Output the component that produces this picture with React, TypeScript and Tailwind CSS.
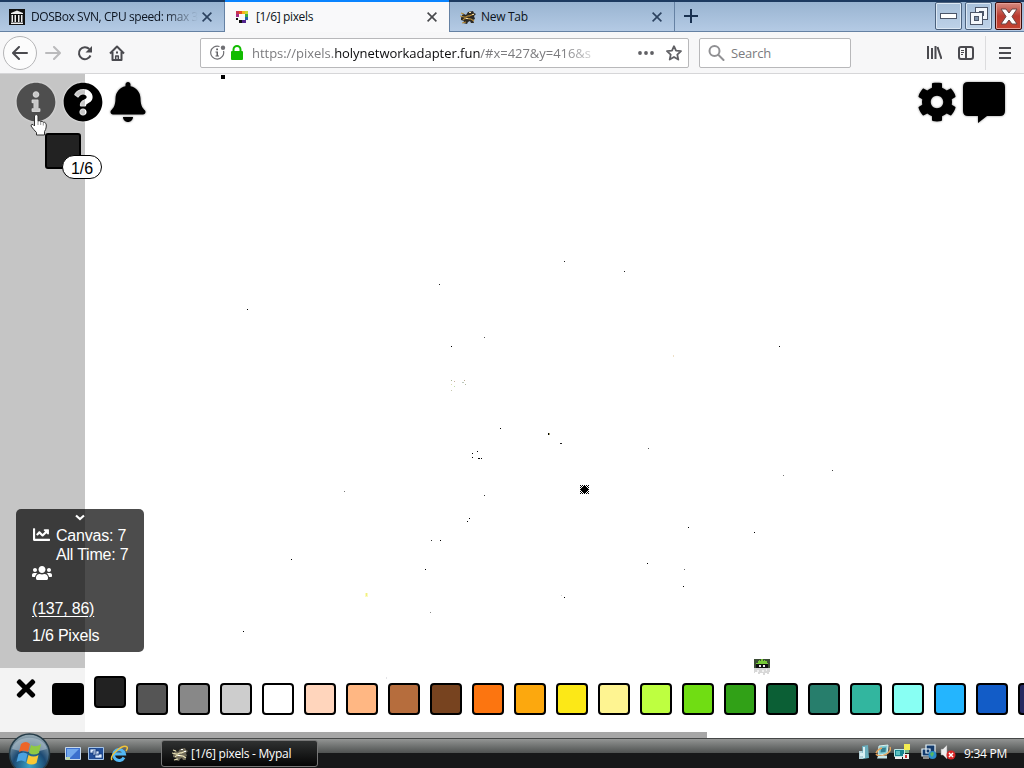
import type { ReactNode } from "react";
import { FaBell, FaChartLine, FaChevronDown, FaCog, FaInfoCircle, FaQuestionCircle, FaTimes, FaUsers } from "react-icons/fa";

const palette = [
  "#000000", "#222222", "#555555", "#888888", "#cdcdcd", "#ffffff", "#ffd5bc", "#ffb783",
  "#b66d3d", "#77431f", "#fc7510", "#fca80e", "#fce817", "#fef491", "#beff40", "#70dd13",
  "#31a117", "#0b5f35", "#277e6c", "#32b69f", "#88fff3", "#24b5fe", "#125cc7", "#262960",
];
const selectedColor = "#222222";

// [x, y, width, height, color] on the board
const pixels: [number, number, number, number, string][] = [
  [221, 75, 4, 4, "#000"], [247, 309, 1, 1, "#000"], [439, 284, 1, 1, "#222"], [564, 261, 1, 1, "#222"],
  [624, 271, 1, 1, "#222"], [484, 337, 1, 1, "#555"], [451, 346, 1, 1, "#000"], [779, 346, 1, 1, "#000"],
  [673, 355, 1, 2, "#eee0c8"], [451, 380, 1, 1, "#a9b595"], [454, 381, 1, 1, "#c8b0a0"], [454, 386, 1, 1, "#bda"],
  [451, 384, 1, 1, "#dcdcb0"], [451, 390, 1, 1, "#c8c8b0"], [462, 382, 2, 1, "#bcc8bc"], [464, 380, 1, 1, "#b9a890"],
  [465, 384, 1, 1, "#b0b8a0"], [500, 428, 1, 1, "#000"], [548, 433, 1, 2, "#000"], [549, 433, 1, 2, "#aaa370"],
  [560, 443, 2, 1, "#222"], [648, 448, 1, 1, "#555"], [472, 453, 1, 1, "#000"], [477, 451, 1, 1, "#000"],
  [472, 457, 1, 1, "#000"], [478, 458, 2, 1, "#000"], [481, 458, 1, 1, "#000"], [832, 470, 1, 1, "#444"],
  [783, 475, 1, 1, "#777"], [344, 491, 1, 1, "#777"], [484, 495, 1, 1, "#333"], [469, 518, 1, 1, "#000"],
  [467, 521, 1, 1, "#000"], [688, 527, 1, 1, "#000"], [754, 532, 1, 1, "#000"], [431, 540, 1, 1, "#333"],
  [440, 540, 1, 1, "#000"], [291, 559, 1, 1, "#000"], [647, 563, 1, 1, "#000"], [425, 569, 1, 1, "#000"],
  [684, 569, 1, 1, "#666"], [683, 586, 1, 1, "#000"], [365, 593, 3, 4, "#fbfac0"], [366, 593, 1, 3, "#f0ef80"],
  [564, 597, 1, 1, "#000"], [561, 595, 1, 1, "#ccc"], [430, 612, 1, 1, "#888"], [243, 631, 1, 1, "#000"],
  [386, 677, 1, 2, "#778"],
];

const burst = Array.from({ length: 81 }, (_, i) => ({ x: i % 9, y: Math.floor(i / 9) })).filter(
  ({ x, y }) => Math.abs(x - 4) + Math.abs(y - 4) <= 3 || (x + y) % 2 === 0,
);

function Board() {
  return (
    <svg className="absolute inset-0" width="1024" height="664" viewBox="0 74 1024 664" shapeRendering="crispEdges">
      <rect x="0" y="74" width="85" height="664" fill="#c5c5c5" />
      {pixels.map(([x, y, w, h, color]) => (
        <rect key={`${x}-${y}`} x={x} y={y} width={w} height={h} fill={color} />
      ))}
      {burst.map(({ x, y }) => (
        <rect key={`${x}-${y}`} x={580 + x} y={485 + y} width="1" height="1" fill="#000" />
      ))}
      <g transform="translate(754 659)">
        <path fill="#3c4d35" d="M0 0h16v9H0z" />
        <path fill="#75c936" d="M2 5h12V4h-1V2h-2V1h-1v1H9V0H7v2H6V1H5v1H4v2H2z" />
        <path fill="#111" d="M2 5h12v4H2z" />
        <path fill="#eee" d="M5 6h2v2H5zM9 6h2v2H9z" />
        <path fill="#3a3a3a" d="M0 9h16v4h-1v2h-2v-1h-2v2H9v-2H6v1H4v-2H1v1H0z" />
        <path fill="#bbb" d="M3 11h2v2H3zM8 11h2v2H8zM12 10h1v2h-1z" />
      </g>
    </svg>
  );
}

function TempleIcon() {
  return (
    <svg width="16" height="16" viewBox="0 0 16 16">
      <path fill="#111" d="M0 0h16v16H0z" />
      <path fill="#eee" d="M8 1.500 14 4v1H2V4zM2.500 6h1.500v7H2.500zM5.500 6H7v7H5.500zM9 6h1.500v7H9zM12 6h1.500v7H12zM2 13.500h12V15H2z" />
    </svg>
  );
}

function PixelsIcon() {
  return (
    <svg width="12" height="12" viewBox="0 0 12 12" shapeRendering="crispEdges">
      <path fill="#c93550" d="M0 0h3v3H0z" />
      <path fill="#e8501e" d="M3 0h3v3H3z" />
      <path fill="#f4b51c" d="M6 0h3v3H6z" />
      <path fill="#c8dc2b" d="M9 0h3v3H9z" />
      <path fill="#a32a84" d="M0 3h3v3H0z" />
      <path fill="#3aaa4a" d="M9 3h3v3H9z" />
      <path fill="#111" d="M0 7h2v2H0zM3 9h3v3H3z" />
      <path fill="#2560aa" d="M9 6h3v3H9z" />
      <path fill="#52248f" d="M6 9h4v3H6z" />
    </svg>
  );
}

function MypalIcon({ light = false }: { light?: boolean }) {
  const dark = light ? "#6f6a58" : "#2c2924";
  return (
    <svg width="16" height="16" viewBox="0 0 16 16">
      <path fill={dark} d="M1 9c1-2 1-4 3-4l2 1 2-3 5-1 1 2 2 1-2 2 1 3-2 1 1 3h-3l-1-2-2 1-1 2-4-1 1-2-3-1z" />
      <path fill="none" stroke={light ? "#ede5b8" : "#b98d3a"} strokeWidth="1.200" d="M0 7l4 1c3 1 3-2 5-1l5-2M3 11c2-3 5-1 8-1l3 2M2 14l4-1M1 4l3 1" />
      <path fill={light ? "#fff" : "#f0d9a0"} d="M9 3h2v1H9zM12 5h2v1h-2zM6 9h2v1H6z" />
    </svg>
  );
}

function TabClose({ dark = false }: { dark?: boolean }) {
  return (
    <svg className="shrink-0" width="10" height="10" viewBox="0 0 10 10" fill="none" stroke={dark ? "#48494c" : "#2c4260"} strokeWidth="1.600">
      <path d="m.6.6 8.800 8.800M9.400.6.600 9.400" />
    </svg>
  );
}

function TitleBar() {
  return (
    <div className="flex h-8 shrink-0 border-t-2 border-[#1d3a60] bg-linear-to-b from-[#99b4d1] to-[#b5cbe5] text-[12px] text-[#0c1420]">
      <div className="flex w-[225px] items-center border-r border-b border-[#6581a3] pr-[12px] pl-[9px]">
        <TempleIcon />
        <span className="ml-[6px] mask-r-from-80% whitespace-nowrap tracking-[-0.42px]">DOSBox SVN, CPU speed: max 3</span>
        <span className="ml-auto"><TabClose /></span>
      </div>
      <div className="-mt-[2px] flex w-[224px] items-center border-t-2 border-[#0a84ff] bg-[#f9f9fa] pr-[12px] pl-[11px]">
        <PixelsIcon />
        <span className="ml-[8px] tracking-[-0.35px]">[1/6] pixels</span>
        <span className="ml-auto"><TabClose dark /></span>
      </div>
      <div className="flex w-[226px] items-center border-r border-b border-l border-[#6581a3] pr-[12px] pl-[10px]">
        <MypalIcon />
        <span className="ml-[5px] tracking-[-0.3px]">New Tab</span>
        <span className="ml-auto"><TabClose /></span>
      </div>
      <div className="flex flex-1 border-b border-[#6581a3] pr-[2px] pl-[9px]">
        <svg className="mt-[7px]" width="14" height="14" viewBox="0 0 14 14" stroke="#1a3150" strokeWidth="2"><path d="M7 0v14M0 7h14" /></svg>
        <div className="ml-auto flex gap-[3px]">
          <div className="flex h-[28px] w-[27px] items-center justify-center rounded-[2px] border border-[#4b617d] bg-linear-to-b from-[#a8c0da] to-[#bed2e8] shadow-[inset_0_0_0_1px_#dce8f4]">
            <div className="h-[6px] w-[17px] border border-[#4b5568] bg-white" />
          </div>
          <div className="flex h-[28px] w-[27px] items-center justify-center rounded-[2px] border border-[#4b617d] bg-linear-to-b from-[#a8c0da] to-[#bed2e8] shadow-[inset_0_0_0_1px_#dce8f4]">
            <svg width="20" height="20" viewBox="0 0 20 20" fill="none">
              <path stroke="#4b5568" strokeWidth="5" d="M8.500 3.500h8v8h-8z" />
              <path stroke="#f4f8fc" strokeWidth="3" d="M8.500 3.500h8v8h-8z" />
              <path fill="#7f93ab" stroke="#4b5568" strokeWidth="5" d="M3.500 8.500h8v8h-8z" />
              <path stroke="#f4f8fc" strokeWidth="3" d="M3.500 8.500h8v8h-8z" />
            </svg>
          </div>
          <div className="flex h-[28px] w-[27px] items-center justify-center rounded-[2px] border border-[#3a0c0c] bg-linear-to-b from-[#d68a80] via-[#b93a30] via-50% to-[#c44331] shadow-[inset_0_0_0_1px_#e6a097]">
            <svg width="18" height="17" viewBox="0 0 18 17">
              <path fill="#fff" stroke="#684545" d="M1 1h5l3 4 3-4h5l-5 7.500 5 7.500h-5l-3-4-3 4H1l5-7.500z" />
            </svg>
          </div>
        </div>
      </div>
    </div>
  );
}

function Toolbar() {
  return (
    <div className="flex h-[42px] shrink-0 items-center border-b border-[#d6d6d8] bg-[#f7f7f8] text-[13px] text-[#4a4a4f]">
      <div className="ml-[3px] flex size-[34px] items-center justify-center rounded-full border border-[#b5b5b7] bg-[#fcfcfc]">
        <svg width="16" height="14" viewBox="0 0 16 14" fill="none" stroke="#4a4a4f" strokeWidth="2" strokeLinecap="round" strokeLinejoin="round"><path d="M15 7H1.500M7 1 1 7l6 6" /></svg>
      </div>
      <svg className="ml-[8px]" width="16" height="14" viewBox="0 0 16 14" fill="none" stroke="#bababc" strokeWidth="2" strokeLinecap="round" strokeLinejoin="round"><path d="M1 7h13.500M9 1l6 6-6 6" /></svg>
      <svg className="ml-[16px]" width="16" height="16" viewBox="0 0 16 16" fill="none" stroke="#4a4a4f" strokeWidth="2"><path d="M13.500 10.500A6 6 0 1 1 12.300 4" /><path fill="#4a4a4f" stroke="none" d="M15 1v6.500H8.500z" /></svg>
      <svg className="ml-[16px]" width="16" height="16" viewBox="0 0 16 16" fill="none" stroke="#4a4a4f" strokeWidth="2" strokeLinejoin="round"><path d="M1 8.500 8 1.500l7 7M3.500 7v8h9V7" /><path strokeWidth="1.500" d="M6.700 15v-4h2.600v4" /><path fill="#4a4a4f" stroke="none" d="M7 6.500h2v2H7z" /></svg>
      <div className="ml-[75px] flex h-[30px] w-[489px] items-center rounded-[2px] border border-[#b8b8ba] bg-white pl-[9px]">
        <svg width="16" height="16" viewBox="0 0 16 16">
          <path fill="none" stroke="#707074" strokeWidth="1.200" d="M9.500 1.500A6.500 6.500 0 1 0 13.500 6" />
          <circle cx="13" cy="2.700" r="2.200" fill="#707074" />
          <path fill="#606064" d="M6.200 3.500h1.800v1.800H6.200zM5.500 6.500H8v4h1v1H5.500v-1h1v-3h-1z" />
        </svg>
        <svg className="ml-[5px]" width="12" height="15" viewBox="0 0 12 15"><rect y="6" width="12" height="9" rx="1" fill="#12bc00" /><path d="M2.500 7V4.500a3.500 3.500 0 0 1 7 0V7" fill="none" stroke="#12bc00" strokeWidth="2" /></svg>
        <div className="mt-[2px] ml-[9px] w-[353px] mask-r-from-88% whitespace-nowrap tracking-[-0.03px] text-[#7b7b7e]">
          https://pixels.<span className="text-[#0c0c0d]">holynetworkadapter.fun</span>/#x=427&y=416&s
        </div>
        <svg className="ml-[33px]" width="16" height="4" viewBox="0 0 16 4" fill="#606064"><circle cx="2" cy="2" r="1.900" /><circle cx="8" cy="2" r="1.900" /><circle cx="14" cy="2" r="1.900" /></svg>
        <svg className="ml-[12px]" width="16" height="16" viewBox="0 0 16 16" fill="none" stroke="#606064" strokeWidth="1.800" strokeLinejoin="round"><path d="m8 1.200 2 4.500 5 .5-3.700 3.400 1 5L8 12l-4.300 2.600 1-5L1 6.200l5-.5z" /></svg>
      </div>
      <div className="ml-[10px] flex h-[30px] w-[152px] items-center rounded-[2px] border border-[#b8b8ba] bg-white pl-[8px] text-[#7b7b7e]">
        <svg width="17" height="16" viewBox="0 0 17 16" fill="none" stroke="#909093" strokeWidth="2" strokeLinecap="round"><circle cx="6.500" cy="6" r="5" /><path d="m10.500 10 5 5" /></svg>
        <span className="mt-[2px] ml-[6px] tracking-[-0.2px]">Search</span>
      </div>
      <svg className="ml-[75px]" width="16" height="15" viewBox="0 0 16 15" fill="none" stroke="#4a4a4f" strokeWidth="2"><path d="M2 1v13M6 3v11M9.500 1v13" /><path d="m11.500 2 4 12" /></svg>
      <svg className="ml-[16px]" width="16" height="14" viewBox="0 0 16 14" fill="none" stroke="#4a4a4f" strokeWidth="2"><rect x="1" y="1" width="14" height="12" rx="2" /><path d="M8 1v12" /><path strokeWidth="1" d="M3 4.500h3M3 6.500h3M3 8.500h2" /></svg>
      <div className="ml-[11px] h-[34px] w-px bg-[#dcdcde]" />
      <svg className="ml-[13px]" width="12" height="12" viewBox="0 0 12 12" stroke="#4a4a4f" strokeWidth="2"><path d="M0 1h12M0 6h12M0 11h12" /></svg>
    </div>
  );
}

function HandCursor() {
  return (
    <svg className="absolute top-[39px] left-[30px]" width="18" height="24" viewBox="0 0 18 24">
      <path
        fill="#fff"
        stroke="#333"
        d="M4.500 2.500q1.800-2 3.500 0V8q1.500-.8 2.700.5 1.500-.7 2.600.8 1.500-.5 2.600 1.200.6 1 .3 3.500-.2 2.500-1.700 4.500V22H6.500v-2.500Q3.500 16.500 1 13q0-2 2-1.500L4.500 13z"
      />
      <path fill="none" stroke="#777" strokeWidth=".8" d="M8 8v4M10.700 9v3M13.300 10v2.500" />
    </svg>
  );
}

function InfoPanel() {
  return (
    <div className="mt-[330px] ml-4 h-[143px] w-32 rounded-[5px] bg-black/70 pl-4 font-['Liberation_Sans',sans-serif] text-base tracking-[-0.2px] text-white">
      <svg className="pt-[5px] ml-[43px]" width="10" height="12" viewBox="0 0 10 7" fill="none" stroke="#fff" strokeWidth="2.200"><path d="m1 1.500 4 3.500 4-3.500" /></svg>
      <div className="mt-[5px] flex h-[38px]">
        <FaChartLine className="ml-[1px]" size={17} />
        <div className="ml-[6px] leading-[19px] whitespace-nowrap">
          <div>Canvas: 7</div>
          <div>All Time: 7</div>
        </div>
      </div>
      <FaUsers className="-mt-[1px]" size={20} />
      <div className="mt-[16px] leading-[20px] underline underline-offset-2">(137, 86)</div>
      <div className="mt-[7px] leading-[20px]">1/6 Pixels</div>
    </div>
  );
}

function Game() {
  return (
    <div className="relative h-[664px] shrink-0 overflow-hidden bg-white">
      <Board />
      <div className="relative flex h-full flex-col">
        <div className="flex h-[56px] items-start pt-[8px] pr-[19px] pl-4">
          <FaInfoCircle className="opacity-60 drop-shadow-[0_0_1px_#fff]" size={40} />
          <FaQuestionCircle className="ml-[7px] drop-shadow-[0_0_1px_#fff]" size={40} />
          <FaBell className="ml-[5px] drop-shadow-[0_0_1px_#888]" size={40} />
          <FaCog className="ml-auto drop-shadow-[0_0_1px_#888]" size={40} />
          <svg className="ml-[6px] drop-shadow-[0_0_1px_#888]" width="42" height="41" viewBox="0 0 42 41"><path d="M5 0h32q5 0 5 5v24q0 5-5 5H24l-9 7v-7H5q-5 0-5-5V5q0-5 5-5z" /></svg>
        </div>
        <div className="ml-[45px] flex h-[49px] pt-[3px]">
          <div className="size-9 rounded-[3px] border-2 border-black bg-[#222]" />
          <div className="mt-[22px] -ml-[19px] h-6 w-10 rounded-full border border-black bg-white text-center font-['Liberation_Sans',sans-serif] text-base leading-[25px]">1/6</div>
        </div>
        <InfoPanel />
        <div className="mt-auto flex h-[64px] shrink-0 bg-white/80">
          <FaTimes className="mt-[7px] ml-[12px] w-[28px] shrink-0" size={27} />
          <div className="ml-[12px] flex gap-[10px] pt-[15px]">
            {palette.map((color) => (
              <div
                key={color}
                className={`size-8 shrink-0 rounded-[4px] border-2 border-black ${color === selectedColor ? "-mt-[7px]" : ""}`}
                style={{ backgroundColor: color }}
              />
            ))}
          </div>
        </div>
        <div className="h-[6px] shrink-0 bg-white">
          <div className="h-full w-[707px] bg-[#a6a6a6]" />
        </div>
      </div>
      <HandCursor />
    </div>
  );
}

function TrayIcon({ children }: { children: ReactNode }) {
  return <svg width="16" height="16" viewBox="0 0 16 16">{children}</svg>;
}

function Taskbar() {
  return (
    <div className="relative flex h-[30px] items-center border-t border-[#454747] bg-linear-to-b from-[#939594] via-[#505352] via-48% to-[#171819] to-50% text-[12px] text-white">
      <svg className="absolute -top-[6px] left-[8px]" width="43" height="36" viewBox="0 0 43 36">
        <defs>
          <radialGradient id="orb" cx="50%" cy="80%" r="75%">
            <stop offset="0" stopColor="#3aa3c8" />
            <stop offset=".55" stopColor="#1c4a73" />
            <stop offset="1" stopColor="#8da2ad" />
          </radialGradient>
        </defs>
        <circle cx="21.500" cy="21" r="20" fill="url(#orb)" stroke="#263d49" strokeWidth="1.500" />
        <path fill="#b8c7cf" opacity=".55" d="M4 16C8 1 35 1 39 16q-17 6-35 0z" />
        <path fill="#ed6528" d="M13 11q5-4 9 0l-2 8q-4-3-9 0z" />
        <path fill="#8fc945" d="M23 12q5 3 10-1l-2 9q-5 3-10 0z" />
        <path fill="#4ba2e0" d="M10.500 21q5-3 9 0l-2 8q-4-3-9 0z" />
        <path fill="#fbc834" d="M20.500 22q5 3 10 0l-2 8q-5 3-10 0z" />
      </svg>
      <div className="ml-[65px] flex items-center gap-[7px]">
        <svg width="16" height="14" viewBox="0 0 16 14"><path fill="#3b6fcd" stroke="#c7d9ec" d="M.5.500h15v12H.5z" /><path fill="#72a7ec" d="M2 2h12L5 11H2z" /><path fill="#bcd7ad" d="M1 10h4v3H1z" /></svg>
        <svg width="16" height="14" viewBox="0 0 16 14"><path fill="#234f99" stroke="#a5c3e6" d="M.5.500h15v12H.5z" /><path fill="#dcecff" stroke="#123876" strokeWidth=".7" d="M2 2h6v4H2zM5 4h6v4H5zM7 7h7v4H7z" /></svg>
        <svg className="-ml-px" width="18" height="18" viewBox="0 0 18 18">
          <path fill="none" stroke="#53b8f4" strokeWidth="3" d="M14 12.500A5.500 5.500 0 1 1 14.500 9H5" />
          <path fill="none" stroke="#f2c437" strokeWidth="1.500" d="M2 15C-1 10 13-1 17 2q1 1-1 4" />
        </svg>
      </div>
      <div className="ml-[33px] flex h-[27px] w-[157px] items-center rounded-[3px] border border-[#777] bg-linear-to-b from-[#303232] to-[#060606] pl-[10px]">
        <MypalIcon light />
        <span className="ml-[3px] tracking-[-0.25px]">[1/6] pixels - Mypal</span>
      </div>
      <div className="mr-[16px] ml-auto flex items-center">
        <div className="-mt-[4px] flex items-center gap-[3px]">
          <TrayIcon><path fill="#b6d3da" d="M3 7h5v8H3z" /><path fill="#6aaebd" d="M6 2l6-1 1 13-6 1z" /><path fill="#d7eff3" d="M7 3h2v11H7zM4 9h3v3H4z" /></TrayIcon>
          <TrayIcon><path fill="#83cdd4" stroke="#d9f0ee" d="M4 2l9-1-1 9-9 1z" /><path fill="#347f90" d="M6 4l5-.500L10.500 8l-5 .500z" /><path fill="none" stroke="#e5a55c" strokeWidth="1.500" d="M1 10c3 5 17-1 14-7M1 9q2-4 6-5" /><path fill="#c8e6e8" d="M3 12l9-.500v3H2z" /></TrayIcon>
          <TrayIcon><path fill="#17838f" stroke="#bde7e5" d="M.5 5.500h10v7H.5z" /><path fill="#5cc0c0" d="M2 7h4v4H2z" /><path fill="#f4ed52" d="M10 0h6v6h-6z" /><path fill="#79b88b" d="M11 6h4v3h-4z" /><path fill="#eee" d="M9 10h6v5H9zM1 13h7v2H1z" /><path fill="#c33" d="M11 11h2v3h-2z" /></TrayIcon>
        </div>
        <div className="-mt-[4px] ml-[11px] flex items-center gap-[3px]">
          <TrayIcon><path fill="#123a6c" stroke="#e6f4fa" strokeWidth="1.200" d="M5 1h9v8H5zM1 5h8v7H1z" /><path stroke="#fff" d="M2 14h6" /><circle cx="11.500" cy="11" r="4" fill="#2b8bc8" /><path fill="#55b761" d="M9 10q3-4 4 0l-2 3z" /></TrayIcon>
          <TrayIcon><path fill="#eee" stroke="#888" strokeWidth=".5" d="M1 5h2l4-4v14l-4-4H1z" /><circle cx="11" cy="11" r="4.500" fill="#d92828" /><path stroke="#fff" strokeWidth="1.500" d="m9 9 4 4M13 9l-4 4" /></TrayIcon>
        </div>
        <span className="ml-[8px] w-[44px] tracking-[-0.28px] whitespace-nowrap">9:34 PM</span>
      </div>
    </div>
  );
}

export default function App() {
  return (
    <div className="flex h-[768px] w-[1024px] flex-col overflow-hidden bg-white font-['Open_Sans','Noto_Sans',sans-serif]">
      <TitleBar />
      <Toolbar />
      <Game />
      <Taskbar />
    </div>
  );
}
